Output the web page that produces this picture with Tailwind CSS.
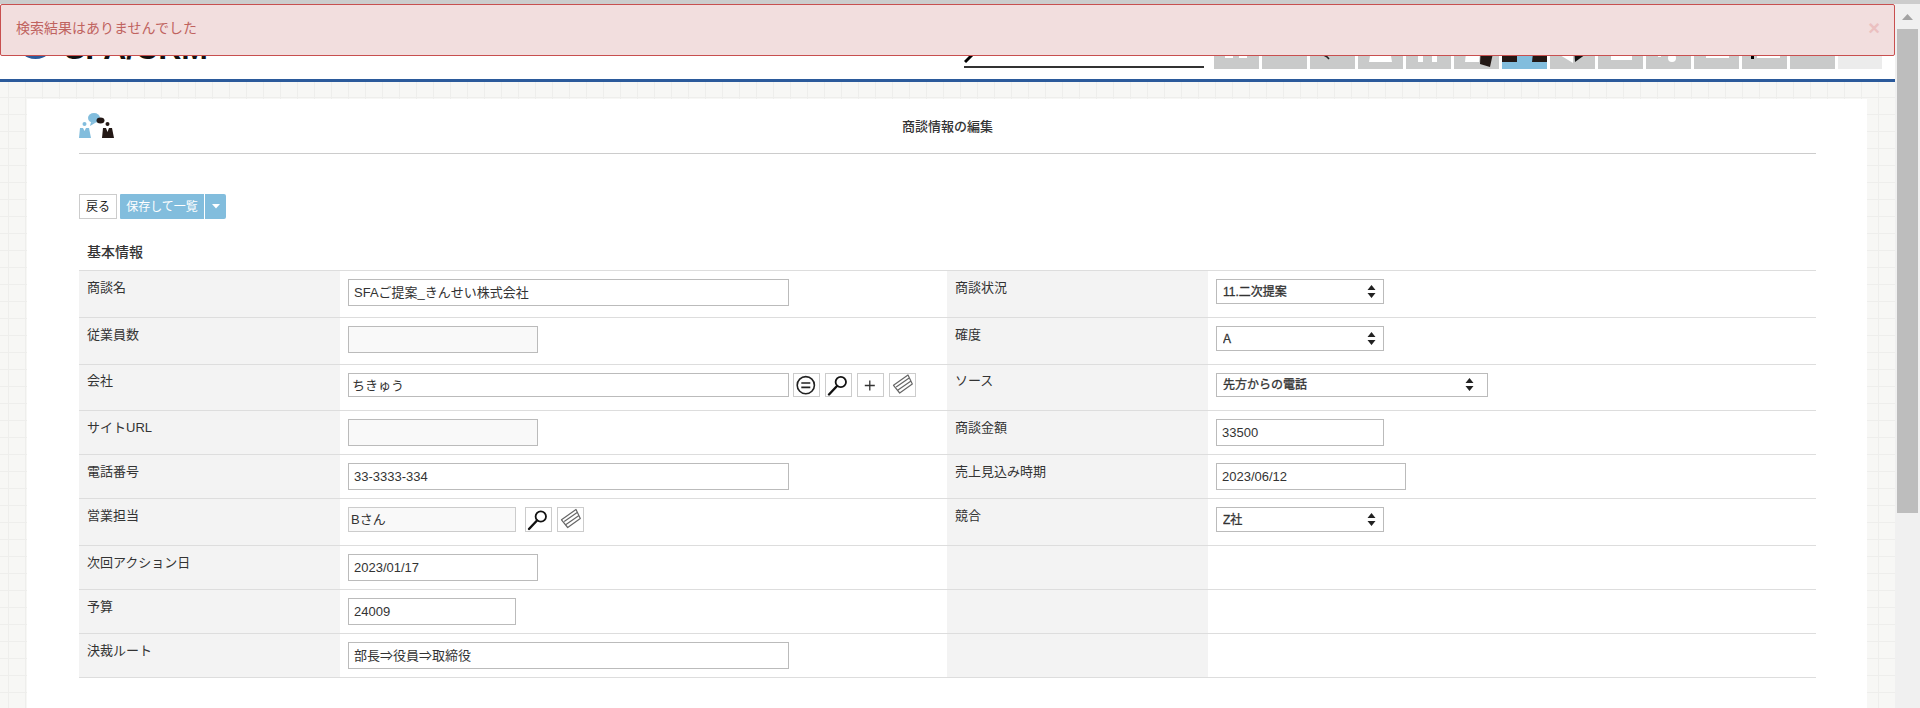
<!DOCTYPE html>
<html lang="ja">
  <head>
    <meta charset="utf-8" />
    <title>商談情報の編集</title>
    <script src="https://cdn.jsdelivr.net/npm/@tailwindcss/browser@4"></script>
  </head>
  <body class="h-[708px] overflow-hidden bg-white font-['Liberation_Sans','Noto_Sans_CJK_JP',sans-serif] text-[13px] text-[#333]">
    <div class="relative flex h-[708px] flex-col">
      <div class="h-[4px] shrink-0 bg-[#cccccc]"></div>

      <!-- alert -->
      <div class="absolute left-0 top-[4px] z-10 flex h-[52px] w-[1895px] items-center justify-between rounded-[2px] border border-[#c84f4f] bg-[#f2dede] pl-[15px] pr-[14px]">
        <span class="-mt-[4px] text-[14px] text-[#c0635f]">検索結果はありませんでした</span>
        <span class="-mt-[5px] text-[20px] font-bold text-[#ebc0c0]">×</span>
      </div>

      <div class="flex min-h-0 flex-1">
        <div class="flex w-[1895px] flex-col">
          <!-- header -->
          <div class="flex h-[75px] shrink-0 items-end bg-white">
            <div class="mb-[20px] ml-[24px] flex items-end gap-[17px]">
              <svg width="23" height="40" viewBox="0 0 23 40"><circle cx="11.5" cy="20" r="20" fill="#2b5a9b" /></svg>
              <span class="text-[32px] font-bold leading-[22px] text-[#111]">SFA/CRM</span>
            </div>
            <div class="relative mb-[11px] ml-auto h-[20px] w-[240px] border-b-2 border-[#333]">
              <svg class="absolute left-0 top-0" width="14" height="18" viewBox="0 0 14 18"><path d="M1 14 L10 5" stroke="#000" stroke-width="3" /></svg>
            </div>
            <div class="mb-[10px] ml-[10px] mr-[13px] flex gap-[3px]">
              <div class="h-[45px] w-[45px] bg-[#c9caca]"><svg width="45" height="45"><rect x="11" y="20" width="8" height="14" fill="#fff" /><rect x="25" y="20" width="8" height="14" fill="#fff" /></svg></div>
              <div class="h-[45px] w-[45px] bg-[#c9caca]"></div>
              <div class="h-[45px] w-[45px] bg-[#c9caca]"><svg width="45" height="45"><path d="M10 30 Q16 31 19 35" fill="none" stroke="#222" stroke-width="1.5" /></svg></div>
              <div class="h-[45px] w-[45px] bg-[#c9caca]"><svg width="45" height="45"><path d="M14 20 H31 L34 38 H11 Z" fill="#fff" /></svg></div>
              <div class="h-[45px] w-[45px] bg-[#c9caca]"><svg width="45" height="45"><path d="M12 20 H31 V38 H26 V32 H17 V38 H12 Z" fill="#fff" /></svg></div>
              <div class="h-[45px] w-[45px] bg-[#c9caca]"><svg width="45" height="45"><path d="M13 20 H27 L25 38 H11 Z" fill="#fff" /><path d="M27 20 H41 L36 43 L26 40 Z" fill="#231815" /></svg></div>
              <div class="h-[45px] w-[45px] bg-[#82bddd]"><svg width="45" height="45"><path d="M3 20 H15 L15 38 H0 V30 Z" fill="#231815" /><path d="M32 20 H45 V38 H30 Z" fill="#231815" /></svg></div>
              <div class="h-[45px] w-[45px] bg-[#c9caca]"><svg width="45" height="45"><path d="M0 25 H23 V39 Z" fill="#fff" /><path d="M24 25 H43 L25 38 Z" fill="#111" /></svg></div>
              <div class="h-[45px] w-[45px] bg-[#c9caca]"><svg width="45" height="45"><rect x="13" y="20" width="21" height="16" fill="#fff" /></svg></div>
              <div class="h-[45px] w-[45px] bg-[#c9caca]"><svg width="45" height="45"><circle cx="26" cy="34" r="4" fill="#fff" /><rect x="12" y="30" width="3" height="3" fill="#fff" /></svg></div>
              <div class="h-[45px] w-[45px] bg-[#c9caca]"><svg width="45" height="45"><rect x="12" y="20" width="23" height="14" fill="#fff" /></svg></div>
              <div class="h-[45px] w-[45px] bg-[#c9caca]"><svg width="45" height="45"><rect x="15" y="20" width="23" height="14" fill="#fff" /><rect x="9" y="30" width="3" height="5" fill="#000" /></svg></div>
              <div class="h-[45px] w-[45px] bg-[#c9caca]"></div>
              <div class="h-[45px] w-[44px] bg-[#ececec]"></div>
            </div>
          </div>
          <div class="h-[3px] shrink-0 bg-[#2b5a9b]"></div>

          <!-- grid background -->
          <div class="min-h-0 flex-1 bg-[#f7f7f5] bg-[image:linear-gradient(#eeeeec_1px,transparent_1px),linear-gradient(90deg,#eeeeec_1px,transparent_1px)] bg-[length:17px_17px] bg-[position:8px_15px] pl-[27px] pr-[28px] pt-[17px]">
            <div class="h-full bg-white pl-[52px] pr-[51px] pt-[11px]">
              <div class="grid h-[44px] grid-cols-[35px_1fr_35px] border-b border-[#cccccc]">
                <svg width="35" height="28" viewBox="0 0 35 28">
                  <ellipse cx="15" cy="8" rx="6" ry="5" fill="#82bddd" />
                  <path d="M12 12 L11 16 L16 13 Z" fill="#82bddd" />
                  <ellipse cx="21.5" cy="10.5" rx="4" ry="3" fill="#231815" />
                  <circle cx="5.5" cy="14" r="2" fill="#82bddd" />
                  <path d="M1 18 H4 L5.5 21 L7 18 H10 L12 28 H0 Z" fill="#82bddd" />
                  <circle cx="28.5" cy="14" r="2" fill="#231815" />
                  <path d="M24 18 H27 L28.5 22 L30 18 H33 L35 28 H23 Z" fill="#231815" />
                </svg>
                <div class="pt-[8px] text-center text-[13px] font-medium leading-[18px]">商談情報の編集</div>
              </div>

              <div class="mt-[40px] flex h-[25px] text-[12px]">
                <button class="h-[25px] w-[38px] border border-[#cccccc] bg-white text-[#222]">戻る</button>
                <button class="ml-[3px] h-[25px] w-[84px] rounded-l-[1px] bg-[#82bddd] text-white">保存して一覧</button>
                <button class="ml-[1px] flex h-[25px] w-[21px] items-center justify-center rounded-r-[2px] bg-[#82bddd]">
                  <svg width="8" height="5" viewBox="0 0 8 5"><path d="M0 0 H8 L4 4.5 Z" fill="#fff" /></svg>
                </button>
              </div>

              <div class="ml-[8px] mt-[22px] mb-[7px] text-[14px] font-medium leading-[22px]">基本情報</div>

              <div class="border-t border-[#dddddd]">
                <!-- 商談名 -->
                <div class="grid h-[47px] grid-cols-[261px_607px_261px_608px] border-b border-[#dddddd]">
                  <div class="bg-[#f3f3f3] pl-[8px] pt-[7px] leading-[20px]">商談名</div>
                  <div class="pl-[8px] pt-[8px]"><input class="h-[27px] w-[441px] border border-[#bbbbbb] px-[5px] pb-[2px] outline-none" value="SFAご提案_きんせい株式会社" /></div>
                  <div class="bg-[#f3f3f3] pl-[8px] pt-[7px] leading-[20px]">商談状況</div>
                  <div class="pl-[8px] pt-[8px]">
                    <div class="relative h-[25px] w-[168px]">
                      <select class="h-[25px] w-full appearance-none border border-[#bbbbbb] bg-white pl-[6px] text-[12px] outline-none [-webkit-text-stroke:0.3px_#333]"><option>11.二次提案</option></select>
                      <svg class="absolute right-[8px] top-[6px]" width="9" height="13" viewBox="0 0 9 13"><path d="M4.5 0 L8.5 5 H0.5 Z M0.5 8 H8.5 L4.5 13 Z" fill="#222" /></svg>
                    </div>
                  </div>
                </div>
                <!-- 従業員数 -->
                <div class="grid h-[47px] grid-cols-[261px_607px_261px_608px] border-b border-[#dddddd]">
                  <div class="bg-[#f3f3f3] pl-[8px] pt-[7px] leading-[20px]">従業員数</div>
                  <div class="pl-[8px] pt-[8px]"><input class="h-[27px] w-[190px] border border-[#bbbbbb] bg-[#f9f9f9] px-[5px] outline-none" readonly /></div>
                  <div class="bg-[#f3f3f3] pl-[8px] pt-[7px] leading-[20px]">確度</div>
                  <div class="pl-[8px] pt-[8px]">
                    <div class="relative h-[25px] w-[168px]">
                      <select class="h-[25px] w-full appearance-none border border-[#bbbbbb] bg-white pl-[6px] text-[12px] outline-none [-webkit-text-stroke:0.3px_#333]"><option>A</option></select>
                      <svg class="absolute right-[8px] top-[6px]" width="9" height="13" viewBox="0 0 9 13"><path d="M4.5 0 L8.5 5 H0.5 Z M0.5 8 H8.5 L4.5 13 Z" fill="#222" /></svg>
                    </div>
                  </div>
                </div>
                <!-- 会社 -->
                <div class="grid h-[46px] grid-cols-[261px_607px_261px_608px] border-b border-[#dddddd]">
                  <div class="bg-[#f3f3f3] pl-[8px] pt-[6px] leading-[20px]">会社</div>
                  <div class="flex pl-[8px] pt-[8px]">
                    <input class="h-[24px] w-[441px] border border-[#bbbbbb] px-[3px] pb-[2px] outline-none" value="ちきゅう" />
                    <div class="ml-[4px] flex gap-[5px]">
                      <button class="h-[24px] w-[27px] border border-[#cccccc] bg-white">
                        <svg width="25" height="22" viewBox="0 0 25 22"><circle cx="11.8" cy="11.2" r="8.6" fill="none" stroke="#222" stroke-width="1.6" /><path d="M7.3 9 H16.3 M7.3 13.4 H16.3" stroke="#222" stroke-width="1.6" /></svg>
                      </button>
                      <button class="h-[24px] w-[27px] border border-[#cccccc] bg-white">
                        <svg width="25" height="22" viewBox="0 0 25 22"><circle cx="14.8" cy="8" r="5.2" fill="none" stroke="#111" stroke-width="1.8" /><path d="M11 12 L3 20.5" stroke="#111" stroke-width="2.4" stroke-linecap="round" /></svg>
                      </button>
                      <button class="h-[24px] w-[27px] border border-[#cccccc] bg-white">
                        <svg width="25" height="22" viewBox="0 0 25 22"><path d="M11.8 6.5 V16.5 M6.8 11.5 H16.8" stroke="#333" stroke-width="1.3" /></svg>
                      </button>
                      <button class="h-[24px] w-[27px] border border-[#cccccc] bg-white">
                        <svg width="25" height="22" viewBox="0 0 25 22"><path d="M3.5 11.3 L18 1 L22.3 10 L9.7 19 Z M6.2 13 L19.5 3.8 M8 16 L21 7" fill="none" stroke="#666" stroke-width="1.2" stroke-linejoin="round" /></svg>
                      </button>
                    </div>
                  </div>
                  <div class="bg-[#f3f3f3] pl-[8px] pt-[6px] leading-[20px]">ソース</div>
                  <div class="pl-[8px] pt-[8px]">
                    <div class="relative h-[24px] w-[272px]">
                      <select class="h-[24px] w-full appearance-none border border-[#bbbbbb] bg-white pl-[6px] text-[12px] outline-none [-webkit-text-stroke:0.3px_#333]"><option>先方からの電話</option></select>
                      <svg class="absolute right-[14px] top-[5px]" width="9" height="13" viewBox="0 0 9 13"><path d="M4.5 0 L8.5 5 H0.5 Z M0.5 8 H8.5 L4.5 13 Z" fill="#222" /></svg>
                    </div>
                  </div>
                </div>
                <!-- サイトURL -->
                <div class="grid h-[44px] grid-cols-[261px_607px_261px_608px] border-b border-[#dddddd]">
                  <div class="bg-[#f3f3f3] pl-[8px] pt-[7px] leading-[20px]">サイトURL</div>
                  <div class="pl-[8px] pt-[8px]"><input class="h-[27px] w-[190px] border border-[#bbbbbb] bg-[#f9f9f9] px-[5px] outline-none" readonly /></div>
                  <div class="bg-[#f3f3f3] pl-[8px] pt-[7px] leading-[20px]">商談金額</div>
                  <div class="pl-[8px] pt-[8px]"><input class="h-[27px] w-[168px] border border-[#bbbbbb] px-[5px] outline-none" value="33500" /></div>
                </div>
                <!-- 電話番号 -->
                <div class="grid h-[44px] grid-cols-[261px_607px_261px_608px] border-b border-[#dddddd]">
                  <div class="bg-[#f3f3f3] pl-[8px] pt-[7px] leading-[20px]">電話番号</div>
                  <div class="pl-[8px] pt-[8px]"><input class="h-[27px] w-[441px] border border-[#bbbbbb] px-[5px] outline-none" value="33-3333-334" /></div>
                  <div class="bg-[#f3f3f3] pl-[8px] pt-[7px] leading-[20px]">売上見込み時期</div>
                  <div class="pl-[8px] pt-[8px]"><input class="h-[27px] w-[190px] border border-[#bbbbbb] px-[5px] outline-none" value="2023/06/12" /></div>
                </div>
                <!-- 営業担当 -->
                <div class="grid h-[47px] grid-cols-[261px_607px_261px_608px] border-b border-[#dddddd]">
                  <div class="bg-[#f3f3f3] pl-[8px] pt-[7px] leading-[20px]">営業担当</div>
                  <div class="flex pl-[8px] pt-[8px]">
                    <input class="h-[25px] w-[168px] border border-[#cccccc] bg-[#f9f9f9] px-[2px] pb-[2px] outline-none" value="Bさん" readonly />
                    <div class="ml-[9px] flex gap-[5px]">
                      <button class="h-[25px] w-[27px] border border-[#cccccc] bg-white">
                        <svg width="25" height="23" viewBox="0 0 25 23"><circle cx="14.8" cy="8.5" r="5.2" fill="none" stroke="#111" stroke-width="1.8" /><path d="M11 12.5 L3 21" stroke="#111" stroke-width="2.4" stroke-linecap="round" /></svg>
                      </button>
                      <button class="h-[25px] w-[27px] border border-[#cccccc] bg-white">
                        <svg width="25" height="23" viewBox="0 0 25 23"><path d="M3.5 11.8 L18 1.5 L22.3 10.5 L9.7 19.5 Z M6.2 13.5 L19.5 4.3 M8 16.5 L21 7.5" fill="none" stroke="#666" stroke-width="1.2" stroke-linejoin="round" /></svg>
                      </button>
                    </div>
                  </div>
                  <div class="bg-[#f3f3f3] pl-[8px] pt-[7px] leading-[20px]">競合</div>
                  <div class="pl-[8px] pt-[8px]">
                    <div class="relative h-[25px] w-[168px]">
                      <select class="h-[25px] w-full appearance-none border border-[#bbbbbb] bg-white pl-[6px] text-[12px] outline-none [-webkit-text-stroke:0.3px_#333]"><option>Z社</option></select>
                      <svg class="absolute right-[8px] top-[6px]" width="9" height="13" viewBox="0 0 9 13"><path d="M4.5 0 L8.5 5 H0.5 Z M0.5 8 H8.5 L4.5 13 Z" fill="#222" /></svg>
                    </div>
                  </div>
                </div>
                <!-- 次回アクション日 -->
                <div class="grid h-[44px] grid-cols-[261px_607px_261px_608px] border-b border-[#dddddd]">
                  <div class="bg-[#f3f3f3] pl-[8px] pt-[7px] leading-[20px]">次回アクション日</div>
                  <div class="pl-[8px] pt-[8px]"><input class="h-[27px] w-[190px] border border-[#bbbbbb] px-[5px] outline-none" value="2023/01/17" /></div>
                  <div class="bg-[#f3f3f3]"></div>
                  <div></div>
                </div>
                <!-- 予算 -->
                <div class="grid h-[44px] grid-cols-[261px_607px_261px_608px] border-b border-[#dddddd]">
                  <div class="bg-[#f3f3f3] pl-[8px] pt-[7px] leading-[20px]">予算</div>
                  <div class="pl-[8px] pt-[8px]"><input class="h-[27px] w-[168px] border border-[#bbbbbb] px-[5px] outline-none" value="24009" /></div>
                  <div class="bg-[#f3f3f3]"></div>
                  <div></div>
                </div>
                <!-- 決裁ルート -->
                <div class="grid h-[44px] grid-cols-[261px_607px_261px_608px] border-b border-[#dddddd]">
                  <div class="bg-[#f3f3f3] pl-[8px] pt-[7px] leading-[20px]">決裁ルート</div>
                  <div class="pl-[8px] pt-[8px]"><input class="h-[27px] w-[441px] border border-[#bbbbbb] px-[5px] pb-[2px] outline-none" value="部長⇒役員⇒取締役" /></div>
                  <div class="bg-[#f3f3f3]"></div>
                  <div></div>
                </div>
              </div>
            </div>
          </div>
        </div>

        <!-- scrollbar -->
        <div class="flex w-[25px] flex-col items-center bg-[#f0f0f0] pt-[10px]">
          <svg width="11" height="6" viewBox="0 0 11 6"><path d="M5.5 0 L11 6 H0 Z" fill="#a3a3a3" /></svg>
          <div class="mt-[9px] h-[484px] w-[21px] bg-[#bdbdbd]"></div>
        </div>
      </div>
    </div>
  </body>
</html>
